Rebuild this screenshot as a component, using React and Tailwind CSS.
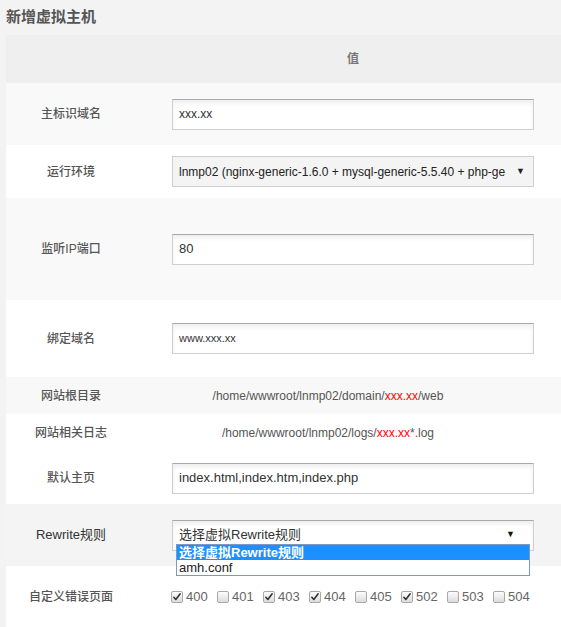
import React from 'react';

const cjk = "font-['Liberation_Sans','Noto_Sans_CJK_SC',sans-serif]";

const inputCls =
  "w-[362px] h-[31px] border border-[#cfcfcf] border-t-[#a9a9a9] bg-white px-[6px] text-[#333] shadow-[inset_0_3px_4px_rgba(0,0,0,0.07)] flex items-center";

function Row({ label, h, bg, labelCls = "text-[#555] font-medium", children }) {
  return (
    <div className={`flex items-center ${h} ${bg}`}>
      <div className={`w-[130px] text-center text-[12px] ${labelCls}`}>{label}</div>
      <div className="flex-1 flex items-center">{children}</div>
    </div>
  );
}

function Check({ on, code }) {
  return (
    <label className="flex items-center w-[46px] shrink-0">
      <span className="w-[12px] h-[12px] rounded-[2px] border border-[#a8a8a8] bg-gradient-to-b from-[#fdfdfd] to-[#dcdcdc] flex items-center justify-center">
        {on && (
          <svg viewBox="0 0 12 12" className="w-[10px] h-[10px]">
            <path d="M2.2 6.4 L4.6 9 L9.8 2.2" fill="none" stroke="#333" strokeWidth="1.9" strokeLinecap="round" strokeLinejoin="round" />
          </svg>
        )}
      </span>
      <span className="ml-[3px] text-[13px] text-[#666]">{code}</span>
    </label>
  );
}

export default function App() {
  const codes = [
    ['400', true], ['401', false], ['403', true], ['404', true],
    ['405', false], ['502', true], ['503', false], ['504', false],
  ];

  return (
    <div className={`min-h-[627px] bg-[#f3f3f3] pl-[6px] overflow-hidden ${cjk}`}>
      <div className="h-[35px] flex items-center text-[15px] font-semibold text-[#555] pb-[1px]">新增虚拟主机</div>

      <div className="bg-white">
        {/* header */}
        <div className="flex items-center h-[48px] bg-[#efefef]">
          <div className="w-[130px]" />
          <div className="flex-1 text-center pl-[9px] text-[12px] font-semibold text-[#777]">值</div>
        </div>

        <Row label="主标识域名" h="h-[62px]" bg="bg-[#f9f9f9]">
          <div className={`ml-[36px] ${inputCls} text-[12px]`}>xxx.xx</div>
        </Row>

        <Row label="运行环境" h="h-[53px]" bg="bg-white">
          <div className="ml-[36px] w-[362px] h-[31px] border border-[#cfcfcf] bg-[#f4f4f4] pl-[6px] pr-[8px] flex items-center text-[12px] text-[#222]">
            <span className="flex-1 overflow-hidden whitespace-nowrap">lnmp02 (nginx-generic-1.6.0 + mysql-generic-5.5.40 + php-ge</span>
            <span className="ml-[8px] text-[9px]">▼</span>
          </div>
        </Row>

        <Row label="监听IP端口" h="h-[102px]" bg="bg-[#f9f9f9]">
          <div className={`ml-[36px] ${inputCls} text-[13px]`}>80</div>
        </Row>

        <Row label="绑定域名" h="h-[77px]" bg="bg-white">
          <div className={`ml-[36px] ${inputCls} text-[11px]`}>www.xxx.xx</div>
        </Row>

        <Row label="网站根目录" h="h-[37px]" bg="bg-[#f8f8f8]">
          <div className="flex-1 text-center pr-[41px] text-[12px] text-[#555]">
            /home/wwwroot/lnmp02/domain/<span className="text-[#f00]">xxx.xx</span>/web
          </div>
        </Row>

        <Row label="网站相关日志" h="h-[38px]" bg="bg-white">
          <div className="flex-1 text-center pr-[41px] text-[12px] text-[#555]">
            /home/wwwroot/lnmp02/logs/<span className="text-[#f00]">xxx.xx</span>*.log
          </div>
        </Row>

        <Row label="默认主页" h="h-[52px]" bg="bg-white">
          <div className={`ml-[36px] ${inputCls} text-[13px]`}>index.html,index.htm,index.php</div>
        </Row>

        <Row label="Rewrite规则" h="h-[62px]" bg="bg-[#f4f4f4]" labelCls="text-[#333] text-[13px]">
          <div className="relative ml-[36px]">
            <div className={`${inputCls} text-[13px] pr-[18px]`}>
              <span className="flex-1">选择虚拟Rewrite规则</span>
              <span className="text-[9px] text-[#111]">▼</span>
            </div>
            {/* open option list */}
            <div className="absolute left-[4px] top-[24px] w-[354px] border border-[#7d98c4] bg-white text-[13px] leading-[15px] z-10">
              <div className="bg-[#1e8fff] text-white font-bold px-[2px]">选择虚拟Rewrite规则</div>
              <div className="text-[#222] px-[2px]">amh.conf</div>
            </div>
          </div>
        </Row>

        <Row label="自定义错误页面" h="h-[61px]" bg="bg-white">
          <div className="ml-[35px] flex items-center">
            {codes.map(([c, on]) => (
              <Check key={c} code={c} on={on} />
            ))}
          </div>
        </Row>
      </div>
    </div>
  );
}
